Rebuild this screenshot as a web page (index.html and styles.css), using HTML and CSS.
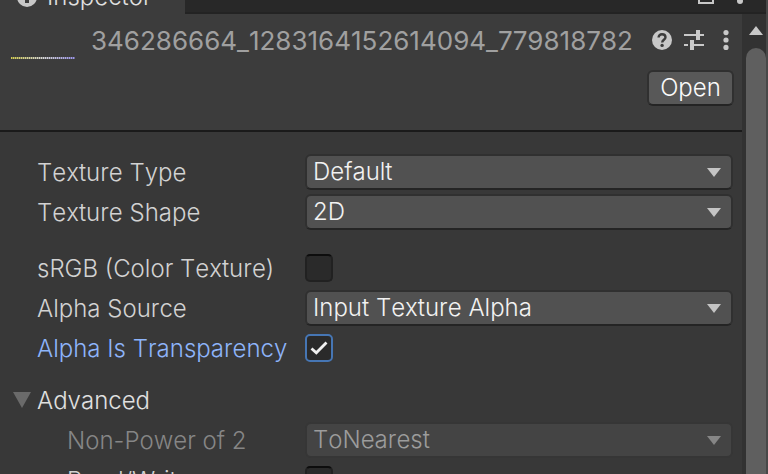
FILE: index.html
```
<!DOCTYPE html>
<html lang="en">
<head>
<meta charset="utf-8">
<title>Inspector</title>
<link rel="stylesheet" href="styles.css">
</head>
<body>
<div class="window">
  <nav class="tabs">
    <a class="tab" href="#inspector">
      <svg class="tab-icon" viewBox="0 0 20 20" aria-hidden="true"><circle cx="10" cy="10" r="10" fill="#c8c8c8"/><path d="M10 4v2M8 9h2v7" stroke="#3c3c3c" stroke-width="4" fill="none"/></svg>
      Inspector
    </a>
    <div class="tab-tools">
      <svg width="16" height="20" viewBox="0 0 16 20" aria-hidden="true"><path d="M1 9h14v10H1zM4 9V5a4 4 0 0 1 8 0v4" fill="none" stroke="#c8c8c8" stroke-width="2"/></svg>
      <svg width="6" height="20" viewBox="0 0 6 20" aria-hidden="true" fill="#c8c8c8"><circle cx="3" cy="3" r="3"/><circle cx="3" cy="10" r="3"/><circle cx="3" cy="17" r="3"/></svg>
    </div>
  </nav>
  <div class="body">
    <main class="panel" id="inspector">
      <header class="header">
        <div class="title-row">
          <div class="preview"></div>
          <h1 class="name">346286664_1283164152614094_779818782</h1>
          <div class="tools">
            <button class="icon-button" aria-label="Help"><svg width="20" height="20" viewBox="0 0 20 20"><circle cx="10" cy="10" r="10" fill="#c8c8c8"/><path d="M6.6 7.4C6.6 5.4 8 4.2 10 4.2s3.5 1.2 3.5 3.1c0 2.4-3.3 2.6-3.3 5.2" fill="none" stroke="#3c3c3c" stroke-width="2.4"/><circle cx="10.1" cy="15.4" r="1.7" fill="#3c3c3c"/></svg></button>
            <button class="icon-button" aria-label="Presets"><svg width="20" height="20" viewBox="0 0 20 20" fill="#c8c8c8"><path d="M0 4h12v2H0zM12 0h4v10h-4zM16 4h4v2h-4zM0 14h4v2H0zM6 10h4v10H6zM10 14h10v2H10z"/></svg></button>
            <button class="icon-button" aria-label="More"><svg width="6" height="20" viewBox="0 0 6 20" fill="#c8c8c8"><circle cx="3" cy="2.6" r="2.6"/><circle cx="3" cy="10" r="2.6"/><circle cx="3" cy="17.4" r="2.6"/></svg></button>
          </div>
        </div>
        <button class="open">Open</button>
      </header>
      <form class="fields">
        <section class="group">
          <div class="row"><label class="label" for="type">Texture Type</label><span class="drop"><select id="type"><option>Default</option></select></span></div>
          <div class="row"><label class="label" for="shape">Texture Shape</label><span class="drop"><select id="shape"><option>2D</option></select></span></div>
        </section>
        <section class="group">
          <div class="row"><label class="label" for="srgb">sRGB (Color Texture)</label><span class="check"><input type="checkbox" id="srgb"></span></div>
          <div class="row"><label class="label" for="source">Alpha Source</label><span class="drop"><select id="source"><option>Input Texture Alpha</option></select></span></div>
          <div class="row active"><label class="label" for="alpha">Alpha Is Transparency</label><span class="check"><input type="checkbox" id="alpha" checked><svg class="tick" width="18" height="14" viewBox="0 0 18 14" aria-hidden="true"><path d="M1.5 7.5l4.8 4.3L16.5 1.5" fill="none" stroke="#f0f0f0" stroke-width="2.8"/></svg></span></div>
        </section>
        <section>
          <button type="button" class="foldout"><svg width="18" height="16" viewBox="0 0 18 16" aria-hidden="true"><path d="M0 0h18L9 16z" fill="#6a6a6a"/></svg><span class="foldout-text">Advanced</span></button>
          <div class="row nested disabled"><label class="label" for="npot">Non-Power of 2</label><span class="drop"><select id="npot" disabled><option>ToNearest</option></select></span></div>
          <div class="row nested"><label class="label" for="rw">Read/Write</label><span class="check"><input type="checkbox" id="rw"></span></div>
        </section>
      </form>
    </main>
    <div class="scrollbar">
      <button class="scroll-up" aria-label="Scroll up"><svg width="14" height="9" viewBox="0 0 14 9"><path d="M7 0l7 9H0z" fill="#c8c8c8"/></svg></button>
      <div class="thumb"></div>
    </div>
  </div>
</div>
</body>
</html>
```
FILE: styles.css
```
* { box-sizing: border-box; }
body {
  margin: 0;
  background: #383838;
  color: #d2d2d2;
  font: 300 24px/28px Inter, "Liberation Sans", sans-serif;
  font-optical-sizing: none;
  font-kerning: none;
}
button, select, input { font: inherit; color: inherit; margin: 0; }
button { padding: 0; border: 0; background: none; }
svg { display: block; flex: none; }

.window {
  display: flex;
  flex-direction: column;
  height: 100vh;
  overflow: hidden;
  border-right: 2px solid #484848;
}
.tabs {
  display: flex;
  flex: none;
  align-items: flex-end;
  justify-content: space-between;
  height: 14px;
  overflow: hidden;
  background: #282828;
  box-shadow: inset 0 -2px #232323;
}
.tab {
  display: flex;
  align-items: center;
  gap: 10px;
  width: 185px;
  padding: 0 0 3px 17px;
  background: #3c3c3c;
  color: #e0e0e0;
  text-decoration: none;
}
.tab-icon { width: 20px; height: 20px; }
.tab-tools { display: flex; gap: 23px; padding: 0 23px 10px 0; }

.body { display: flex; flex: 1; min-height: 0; }
.panel { flex: 1; min-width: 0; overflow: hidden; }
.header {
  height: 118px;
  padding: 12px 8px 0 11px;
  background: #3c3c3c;
  border-bottom: 2px solid #1a1a1a;
}
.title-row { display: flex; align-items: center; height: 28px; }
.preview {
  align-self: flex-end;
  flex: none;
  width: 64px;
  height: 2px;
  margin: 0 16px -5px 0;
  background:
    repeating-linear-gradient(90deg, transparent 0 1px, #3c3c3c80 1px 2px),
    linear-gradient(90deg, #d2cc50, #d8d8d8 50%, #9a94ea);
}
.name {
  flex: 1;
  min-width: 0;
  margin: 0;
  padding-top: 1px;
  color: #a0a0a0;
  font: inherit;
  font-weight: 400;
  font-size: 26px;
  line-height: 32px;
  white-space: nowrap;
}
.tools { display: flex; gap: 12px; padding-right: 5px; }
.tools .icon-button:last-child { padding-left: 7px; }
.open {
  display: block;
  width: 87px;
  height: 36px;
  margin: 16px 0 0 auto;
  background: #585858;
  border: 2px solid #303030;
  border-bottom-color: #242424;
  border-radius: 6px;
  color: #fafafa;
}

.fields { padding: 20px 9px 0 37px; }
.group { padding-bottom: 16px; }
.group + .group { padding-bottom: 12px; }
.row { display: flex; align-items: center; height: 40px; }
.label, .foldout-text { padding-top: 2px; }
.label { flex: none; width: 268px; white-space: nowrap; }
.nested { padding-left: 30px; }
.nested .label { width: 238px; }
.drop { position: relative; flex: 1; min-width: 0; }
.drop::after {
  content: "";
  position: absolute;
  top: 14px;
  right: 12px;
  width: 14px;
  height: 9px;
  background: #c4c4c4;
  clip-path: polygon(0 0, 100% 0, 50% 100%);
  pointer-events: none;
}
select {
  display: block;
  appearance: none;
  width: 100%;
  height: 36px;
  padding: 0 30px 0 6px;
  background: #515151;
  border: 2px solid #303030;
  border-bottom-color: #242424;
  border-radius: 6px;
  color: #f2f2f2;
}
.check { position: relative; flex: none; }
input[type="checkbox"] {
  display: block;
  appearance: none;
  width: 28px;
  height: 28px;
  background: #2a2a2a;
  border: 2px solid #212121;
  border-top-color: #0d0d0d;
  border-radius: 5px;
}
.tick { position: absolute; top: 7px; left: 5px; pointer-events: none; }
.active { color: #8eb4fa; }
.active input[type="checkbox"] { border-color: #4676b4; }
.disabled { color: #868686; }
.disabled select {
  background: #444444;
  border-color: #363636;
  color: #9c9c9c;
  opacity: 1;
}
.disabled .drop::after { background: #868686; }
.foldout {
  display: flex;
  align-items: center;
  gap: 6px;
  height: 40px;
  margin-left: -24px;
  color: #e0e0e0;
}

.scrollbar {
  display: flex;
  flex-direction: column;
  flex: none;
  width: 24px;
  padding-left: 4px;
  background: #323232;
}
.scroll-up { display: flex; justify-content: center; padding: 12px 0 13px; }
.thumb { flex: 1; background: #5f5f5f; border-radius: 10px 10px 0 0; }
```
